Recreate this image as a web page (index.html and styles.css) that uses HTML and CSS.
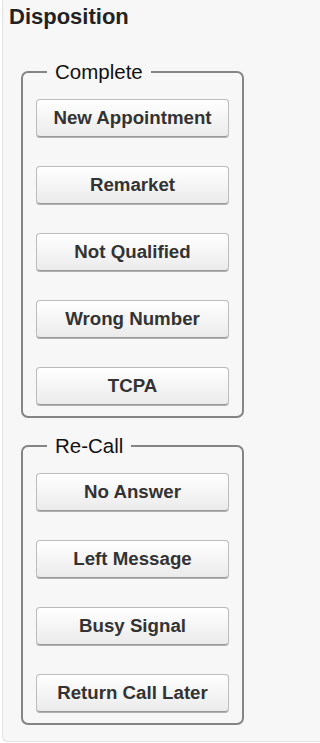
FILE: index.html
```html
<!DOCTYPE html>
<html>
<head>
<meta charset="utf-8">
<link rel="stylesheet" href="styles.css">
</head>
<body>
<div class="panel">
  <div class="title">Disposition</div>
  <fieldset class="group">
    <legend class="group-label">Complete</legend>
    <div class="buttons">
      <button class="btn">New Appointment</button>
      <button class="btn">Remarket</button>
      <button class="btn">Not Qualified</button>
      <button class="btn">Wrong Number</button>
      <button class="btn">TCPA</button>
    </div>
  </fieldset>
  <fieldset class="group">
    <legend class="group-label">Re-Call</legend>
    <div class="buttons">
      <button class="btn">No Answer</button>
      <button class="btn">Left Message</button>
      <button class="btn">Busy Signal</button>
      <button class="btn">Return Call Later</button>
    </div>
  </fieldset>
</div>
</body>
</html>
```
FILE: styles.css
```css
html, body {
  margin: 0;
  padding: 0;
  background: #ffffff;
  overflow: hidden;
}
body {
  font-family: "Liberation Sans", Arial, sans-serif;
}
.panel {
  margin-left: 2px;
  background: #f7f7f7;
  border-left: 1px solid #e2e2e2;
  border-bottom: 1px solid #e2e2e2;
  border-bottom-left-radius: 6px;
  padding: 4px 0 16px 6px;
}
.title {
  font-size: 22px;
  font-weight: bold;
  color: #222;
  margin-bottom: 30px;
}
.group {
  box-sizing: border-box;
  width: 223px;
  margin: 0 0 16px 12px;
  border: 2px solid #858585;
  border-radius: 7px;
  padding: 15px 13px 11px 13px;
}
.group:last-child {
  margin-bottom: 0;
}
.group-label {
  font-size: 20.5px;
  color: #111;
  padding: 0 8px;
  margin-left: 11px;
}
.buttons {
  display: flex;
  flex-direction: column;
  gap: 29px;
}
.btn {
  box-sizing: border-box;
  height: 38px;
  width: 100%;
  margin: 0;
  padding: 0;
  font-family: "Liberation Sans", Arial, sans-serif;
  font-size: 18.7px;
  font-weight: bold;
  color: #333;
  border: 1px solid #bcbcbc;
  border-bottom-color: #9a9a9a;
  border-radius: 4px;
  background: linear-gradient(#ffffff, #ebebeb);
  box-shadow: 0 1px 0 #b0b0b0;
}
```
